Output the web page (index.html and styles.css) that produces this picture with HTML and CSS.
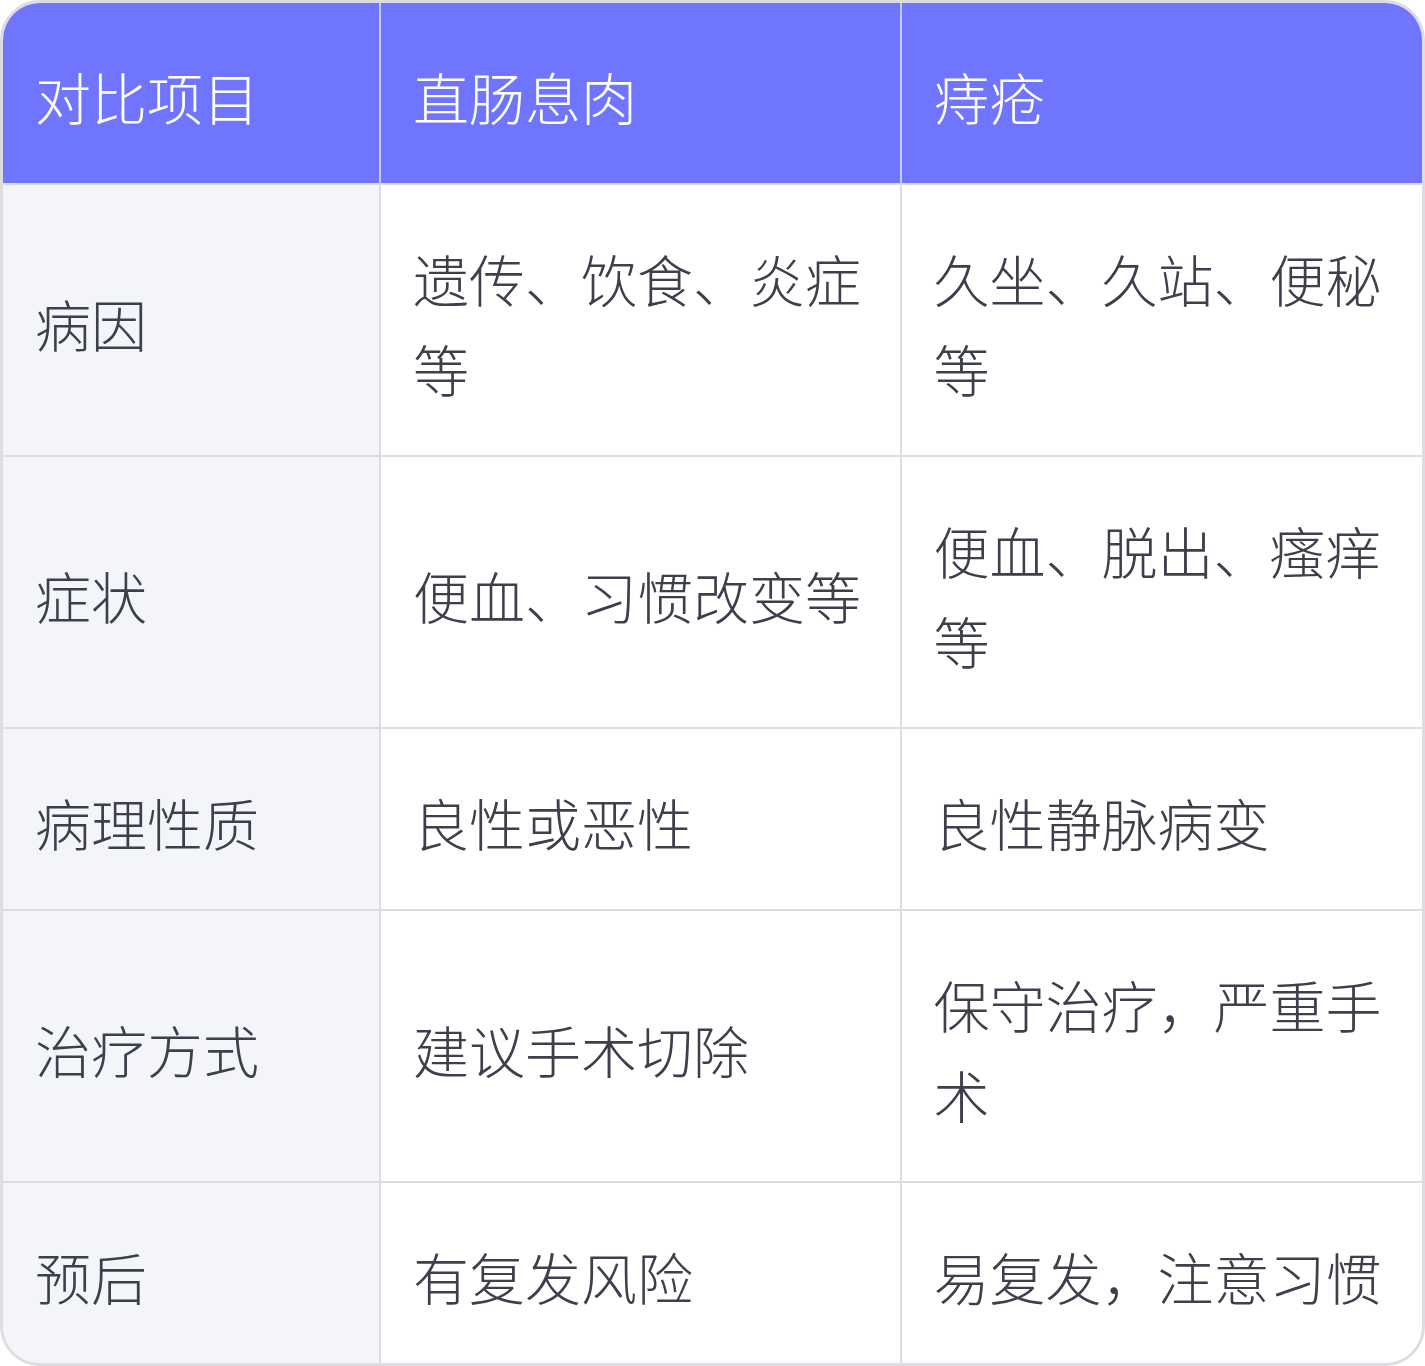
FILE: index.html
```html
<!DOCTYPE html>
<html lang="zh-CN">
<head>
<meta charset="utf-8">
<title>直肠息肉与痔疮对比</title>
<link rel="stylesheet" href="styles.css">
</head>
<body>
<div class="table">
  <div class="cell head first">对比项目</div>
  <div class="cell head">直肠息肉</div>
  <div class="cell head last">痔疮</div>

  <div class="cell label">病因</div>
  <div class="cell">遗传、饮食、炎症等</div>
  <div class="cell last">久坐、久站、便秘等</div>

  <div class="cell label">症状</div>
  <div class="cell">便血、习惯改变等</div>
  <div class="cell last">便血、脱出、瘙痒等</div>

  <div class="cell label">病理性质</div>
  <div class="cell">良性或恶性</div>
  <div class="cell last">良性静脉病变</div>

  <div class="cell label">治疗方式</div>
  <div class="cell">建议手术切除</div>
  <div class="cell last">保守治疗，严重手术</div>

  <div class="cell label bottom">预后</div>
  <div class="cell bottom">有复发风险</div>
  <div class="cell last bottom">易复发，注意习惯</div>
</div>
</body>
</html>
```

FILE: styles.css
```css
html, body {
  margin: 0;
  padding: 0;
  background: #ffffff;
}

.table {
  box-sizing: border-box;
  width: 1425px;
  height: 1366px;
  border: 3px solid #dcdde2;
  border-radius: 40px;
  overflow: hidden;
  display: grid;
  grid-template-columns: 378px 1fr 1fr;
  grid-template-rows: 182px 272px 272px 182px 272px auto;
  font-family: "Noto Sans CJK SC", "Noto Sans", sans-serif;
  font-size: 56px;
  line-height: 90px;
  color: #3d404c;
}

.cell {
  box-sizing: border-box;
  padding: 6px 34px 0 32px;
  display: flex;
  align-items: center;
  border-right: 2px solid #dcdde2;
  border-bottom: 2px solid #dcdde2;
  background: #ffffff;
  font-weight: 300;
}

.cell.last {
  border-right: none;
}

.cell.bottom {
  border-bottom: none;
}

.cell.head {
  background: #7075ff;
  color: #ffffff;
  border-right-color: #c9cbef;
  border-bottom-color: #dcdde2;
  padding-top: 6px;
}

.cell.label {
  background: #f4f5f9;
}
```
